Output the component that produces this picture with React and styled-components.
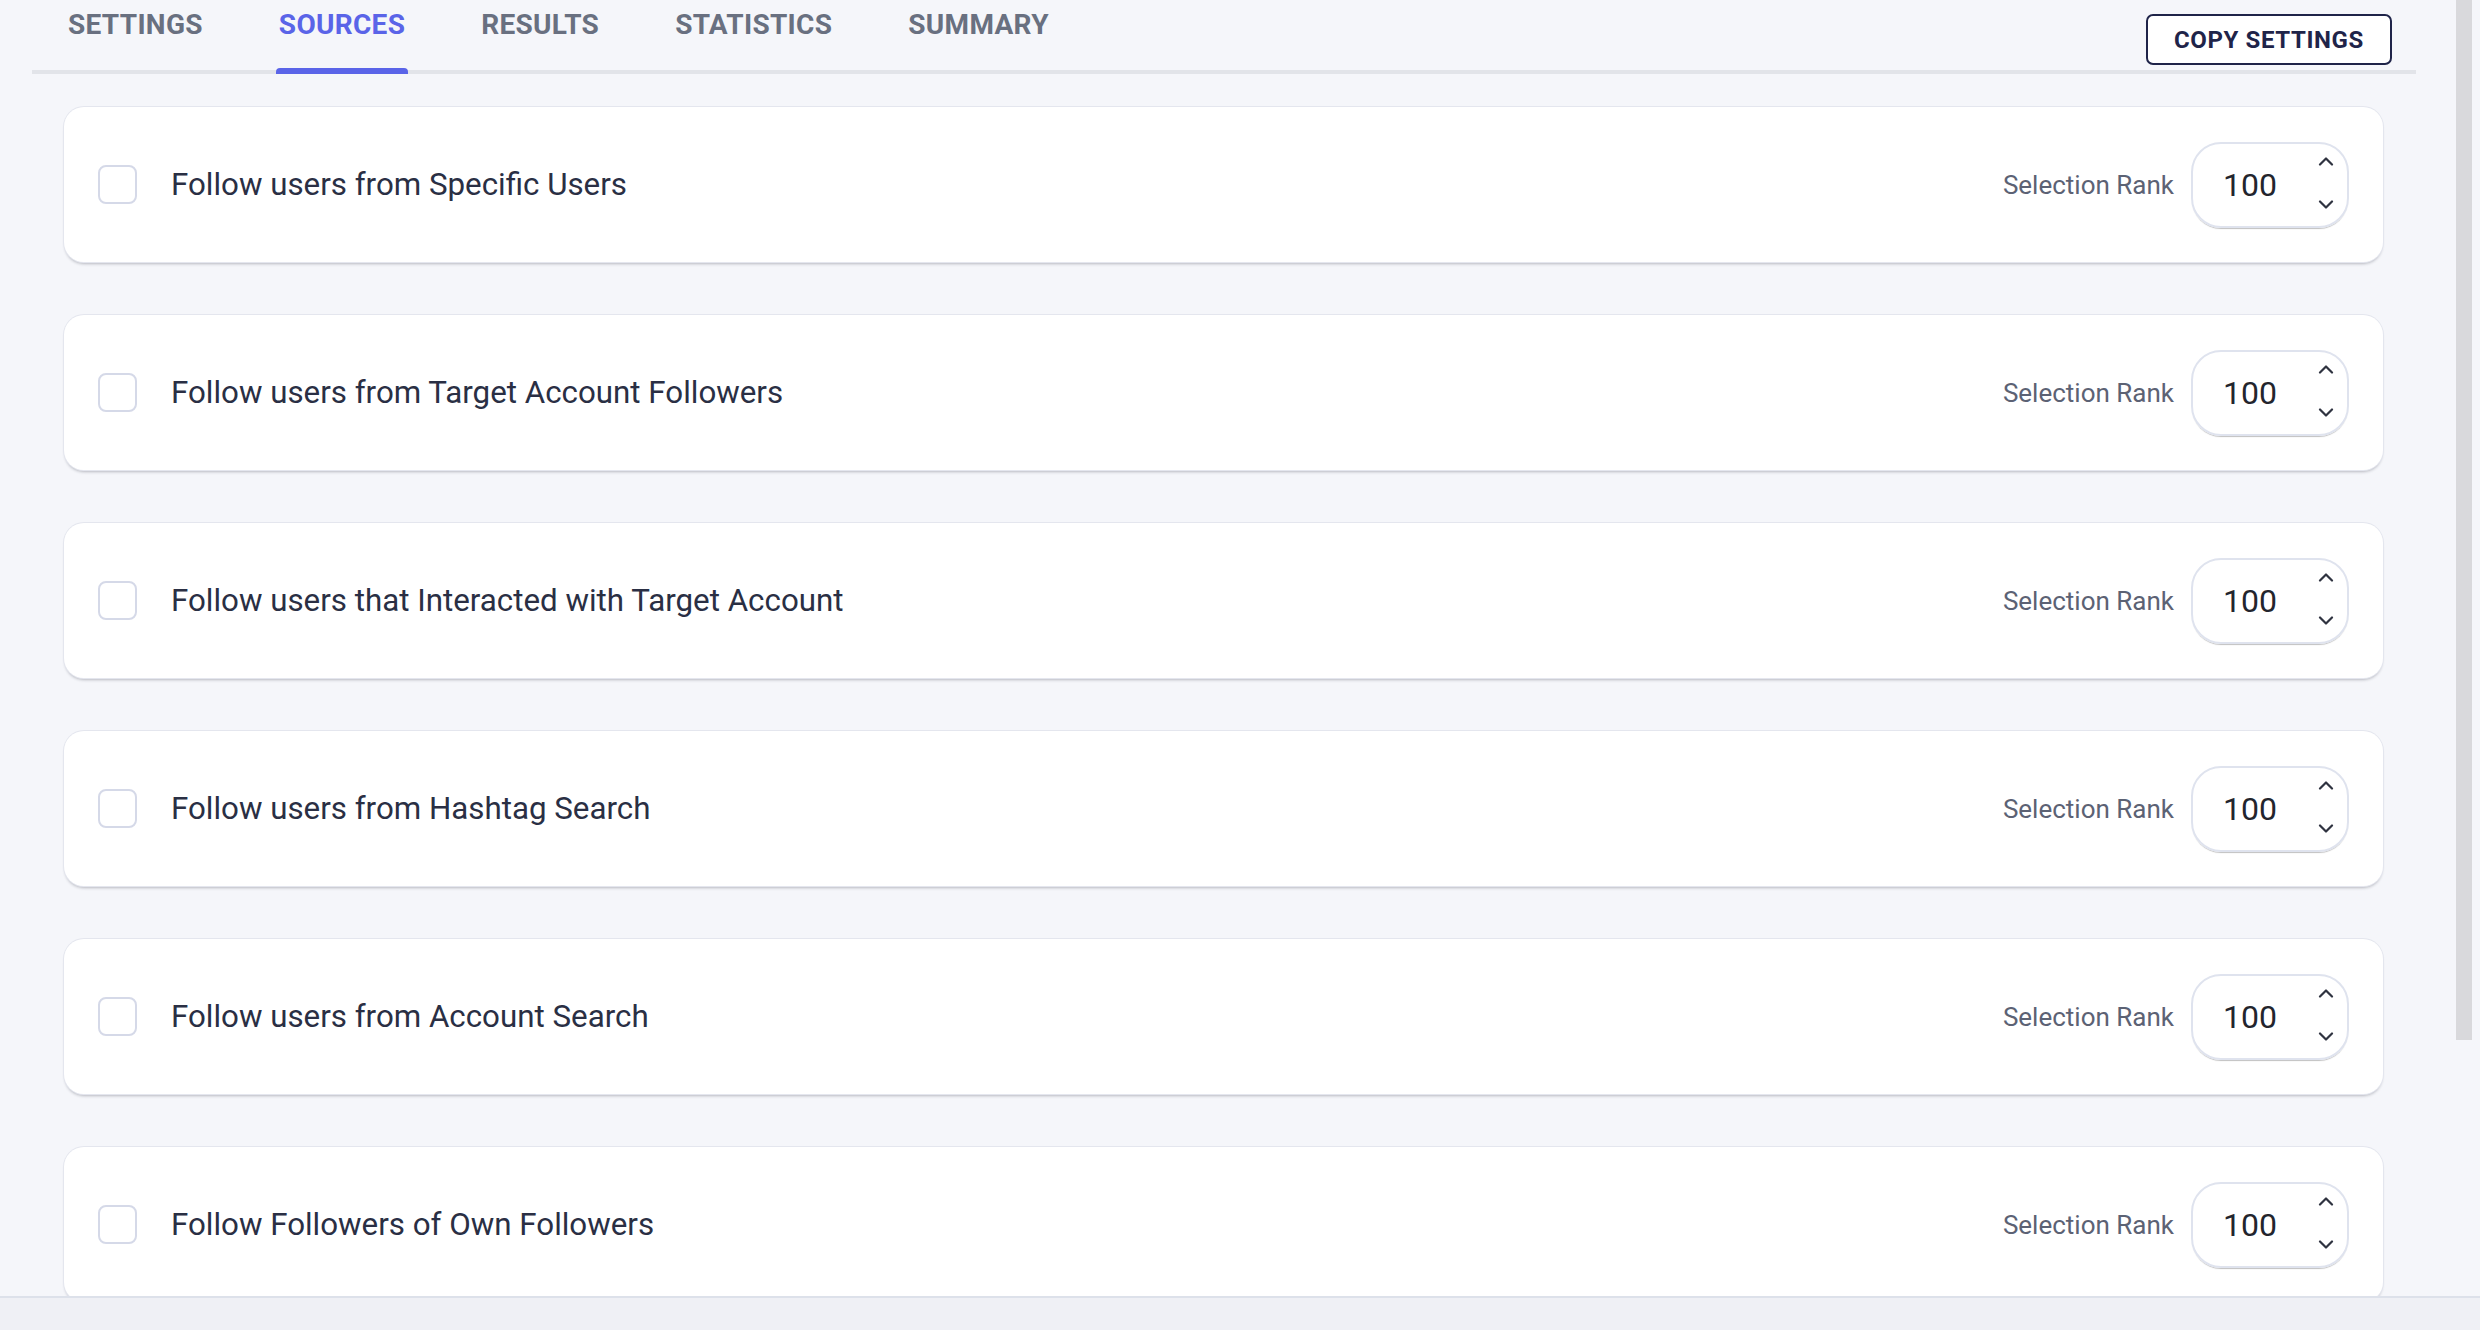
import React from "react"
import styled, { createGlobalStyle } from "styled-components"

const tabs = ["Settings", "Sources", "Results", "Statistics", "Summary"]

const sources = [
  "Follow users from Specific Users",
  "Follow users from Target Account Followers",
  "Follow users that Interacted with Target Account",
  "Follow users from Hashtag Search",
  "Follow users from Account Search",
  "Follow Followers of Own Followers"
]

const Chevron = ({ up }) => (
  <svg width="16" height="10" viewBox="0 0 16 10">
    <path
      d={up ? "M2 8.5 L8 2.5 L14 8.5" : "M2 1.5 L8 7.5 L14 1.5"}
      fill="none"
      stroke="#2f3340"
      strokeWidth="2.2"
      strokeLinecap="round"
      strokeLinejoin="round"
    />
  </svg>
)

const App = () => (
  <>
    <GlobalStyle />
    <Page>
      <Main>
        <Content>
          <Header>
            <TabList>
              {tabs.map(tab => (
                <Tab key={tab} active={tab === "Sources"}>
                  {tab}
                </Tab>
              ))}
            </TabList>
            <CopyButton>Copy Settings</CopyButton>
          </Header>
          <CardList>
            {sources.map(source => (
              <Card key={source}>
                <Checkbox />
                <Label>{source}</Label>
                <RankLabel>Selection Rank</RankLabel>
                <NumberField>
                  <NumberValue>100</NumberValue>
                  <Spinner>
                    <Chevron up />
                    <Chevron />
                  </Spinner>
                </NumberField>
              </Card>
            ))}
          </CardList>
        </Content>
        <ScrollTrack>
          <ScrollThumb />
        </ScrollTrack>
      </Main>
      <BottomBar />
    </Page>
  </>
)

export default App

const GlobalStyle = createGlobalStyle`
  html, body {
    margin: 0;
    padding: 0;
    background: #f5f6fa;
    font-family: Roboto, "Liberation Sans", sans-serif;
  }
`

const Page = styled.div`
  height: 1330px;
  display: flex;
  flex-direction: column;
  overflow: hidden;
`

const Main = styled.div`
  flex: 1;
  min-height: 0;
  display: flex;
`

const Content = styled.div`
  flex: 1;
  min-width: 0;
  padding: 0 40px 0 32px;
  overflow: hidden;
`

const Header = styled.div`
  height: 70px;
  display: flex;
  justify-content: space-between;
  border-bottom: 4px solid #e2e4e9;
`

const TabList = styled.div`
  display: flex;
  gap: 70px;
  padding-left: 33px;
`

const Tab = styled.div`
  position: relative;
  padding: 11px 3px 0;
  font-size: 28px;
  line-height: 28px;
  font-weight: 700;
  letter-spacing: 0.3px;
  text-transform: uppercase;
  color: ${p => (p.active ? "#5a64e8" : "#697080")};
  &:after {
    content: "";
    display: ${p => (p.active ? "block" : "none")};
    position: absolute;
    left: 0;
    right: 0;
    bottom: -4px;
    height: 6px;
    border-radius: 4px 4px 0 0;
    background: #5a64e8;
  }
`

const CopyButton = styled.button`
  align-self: flex-start;
  margin: 14px 24px 0 0;
  width: 246px;
  height: 51px;
  border: 2px solid #1f2449;
  border-radius: 7px;
  background: #fff;
  color: #1f2449;
  font-family: Roboto, "Liberation Sans", sans-serif;
  font-size: 24px;
  font-weight: 700;
  letter-spacing: 0.6px;
  text-transform: uppercase;
`

const CardList = styled.div`
  display: flex;
  flex-direction: column;
  gap: 53px;
  padding: 33px 33px 0 32px;
`

const Card = styled.div`
  flex-shrink: 0;
  height: 155px;
  display: flex;
  align-items: center;
  padding: 0 34px;
  background: #fff;
  border-radius: 20px;
  box-shadow: 0 0 0 1px #e4e6ee, 0 3px 3px -1px rgba(40, 44, 60, 0.3);
`

const Checkbox = styled.div`
  width: 39px;
  height: 39px;
  box-sizing: border-box;
  border: 2px solid #d5d9e8;
  border-radius: 8px;
  margin-right: 34px;
`

const Label = styled.div`
  flex: 1;
  font-size: 31.3px;
  color: #2a2f44;
`

const RankLabel = styled.div`
  font-size: 26px;
  color: #5c6274;
  margin-right: 17px;
`

const NumberField = styled.div`
  width: 158px;
  height: 86px;
  box-sizing: border-box;
  display: flex;
  align-items: center;
  justify-content: space-between;
  padding: 0 13px 0 30px;
  border: 2px solid #dfe3ee;
  border-radius: 30px;
  box-shadow: 0 2px 1px -1px rgba(0, 0, 0, 0.25);
`

const NumberValue = styled.div`
  font-size: 32px;
  color: #23252d;
`

const Spinner = styled.div`
  display: flex;
  flex-direction: column;
  gap: 34px;
  margin-top: -3px;
`

const ScrollTrack = styled.div`
  width: 16px;
  margin-right: 8px;
`

const ScrollThumb = styled.div`
  height: 1040px;
  background: #d9d9dc;
`

const BottomBar = styled.div`
  height: 32px;
  flex-shrink: 0;
  border-top: 2px solid #dde1ea;
  background: #eff0f5;
`
